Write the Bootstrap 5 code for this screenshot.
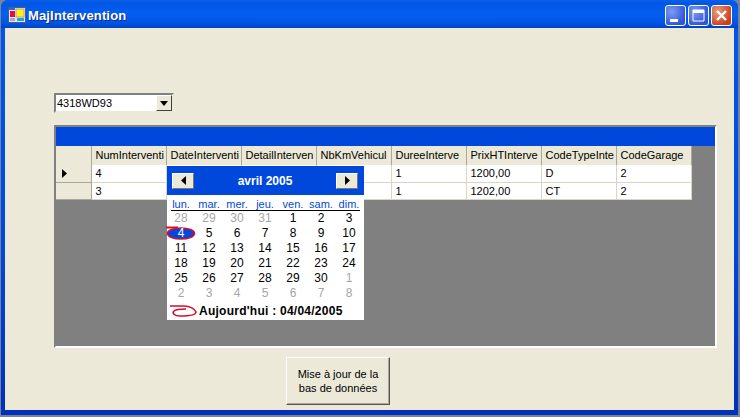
<!DOCTYPE html>
<html lang="fr">
<head>
<meta charset="UTF-8">
<title>MajIntervention</title>
<link href="https://cdn.jsdelivr.net/npm/bootstrap@5.3.0/dist/css/bootstrap.min.css" rel="stylesheet">
<style>
    html, body { height: 100%; margin: 0; overflow: hidden; background: #76849c; }
    body, button, table { font-family: "Liberation Sans", Arial, sans-serif; font-size: 11px; color: #000; }
    .win { width: 737px; height: 415px; margin-left: 1px; background: linear-gradient(#0058ee, #0048dc 60%, #0030b8); border-radius: 7px 7px 0 0; }
    .win-title { height: 28px; padding: 2px 6px 0 7px; gap: 2px; background: linear-gradient(#0a5fe8, #0256e6 12%, #045ff0 50%, #0053e2 85%, #0042c0); border-radius: 7px 7px 0 0; }
    .win-name { font: bold 13px "Liberation Sans", Arial, sans-serif; letter-spacing: .15px; color: #fff; text-shadow: 1px 1px 0 #0f2a80; }
    .cap-group { gap: 2px; }
    .cap-btn { width: 21px; height: 21px; border: 1px solid #fff; border-radius: 3px; background: radial-gradient(circle at 30% 30%, #7d9cf0, #2f55d8 75%); position: relative; padding: 0; }
    .cap-btn.cls { background: radial-gradient(circle at 30% 30%, #eb9c80, #c9401c 75%); }
    .cap-btn svg { position: absolute; left: 0; top: 0; }
    .win-body { height: 382px; margin: 0 4px; background: #ece9d8; padding: 65px 0 0 49px; }
    .combo { width: 120px; height: 20px; background: #fff; border: 2px solid; border-color: #808080 #ece9d8 #ece9d8 #808080; padding-left: 1px; line-height: 16px; margin-bottom: 12px; }
    .combo-arrow { width: 16px; height: 16px; margin-left: auto; background: #ece9d8; border: 1px solid; border-color: #fff #404040 #404040 #fff; }
    .grid-box { width: 663px; height: 223px; background: #808080; border: 2px solid; border-color: #808080 #fff #fff #808080; position: relative; margin-bottom: 9px; }
    .grid-cap { height: 19px; background: #0048dc; }
    .grid-tbl { border-collapse: collapse; table-layout: fixed; width: 635px; }
    .grid-tbl th, .grid-tbl td { height: 17px; padding: 0 0 0 4px; font-weight: 400; white-space: nowrap; overflow: hidden; background: #fff; border-right: 1px solid #d8d5c6; border-bottom: 1px solid #d8d5c6; }
    .grid-tbl th { width: 75px; height: 19px; background: #ece9d8; border-right: 1px solid #aca899; border-bottom: 0; }
    .grid-tbl th:first-child { width: 35px; }
    .grid-tbl .row-head { background: #ece9d8; padding: 0 0 0 6px; border-right: 1px solid #aca899; border-bottom: 1px solid #aca899; }
    .cal { position: absolute; left: 111px; top: 39px; width: 197px; height: 154px; background: #fff; }
    .cal-head { height: 29px; background: #0048dc; padding: 0 6px 0 5px; color: #fff; font-weight: 700; font-size: 12px; }
    .cal-nav { width: 22px; height: 16px; padding: 0; background: #ece9d8; border: 1px solid; border-color: #fff #777 #777 #fff; }
    .cal-days { margin: 0 4px; border-bottom: 1px solid #000; height: 16px; padding-top: 2px; color: #0048dc; line-height: 14px; }
    .cal-days span, .cal-week span { width: 28px; text-align: center; flex: none; }
    .cal-days span:first-child { margin-left: -4px; }
    .cal-week { height: 15px; line-height: 15px; font-size: 12px; }
    .off { color: #a6a6a6; }
    .today-cell { position: relative; color: #fff; }
    .today-cell svg { position: absolute; left: 0; top: 0; overflow: visible; }
    .today-cell b { position: relative; font-weight: 400; }
    .cal-foot { padding-left: 3px; height: 19px; font-weight: 700; font-size: 12px; letter-spacing: .25px; }
    .cal-foot svg { margin-right: 3px; overflow: visible; }
    .majbtn { display: block; width: 104px; height: 48px; margin-left: 232px; background: #ece9d8; border: 1px solid; border-color: #fff #555 #555 #fff; box-shadow: inset -1px -1px 0 #aca899; line-height: 14px; padding: 0; }
</style>
</head>
<body>
<div class="win">
    <div class="win-title d-flex align-items-center">
        <svg width="18" height="16" viewBox="0 0 18 16">
            <rect x="0.5" y="0.5" width="17" height="15" fill="#dfe6f5" stroke="#4a5a90"/>
            <rect x="1" y="1" width="6" height="2" fill="#2d69c8"/>
            <rect x="2" y="4" width="5" height="6" fill="#e0103c"/>
            <rect x="8" y="2" width="8" height="8" fill="#ffee22" stroke="#777" stroke-width=".5"/>
            <rect x="2" y="11" width="5" height="3" fill="#a9a9c8"/>
            <rect x="9" y="11" width="7" height="3" fill="#25a0d8"/>
        </svg>
        <span class="win-name">MajIntervention</span>
        <div class="cap-group d-flex ms-auto">
            <button class="cap-btn" aria-label="Réduire"><svg width="19" height="19"><rect x="4" y="13" width="8" height="3" fill="#fff"/></svg></button>
            <button class="cap-btn" aria-label="Agrandir"><svg width="19" height="19"><path d="M4 4h11v11H4z" fill="none" stroke="#fff"/><rect x="4" y="4" width="11" height="3" fill="#fff"/></svg></button>
            <button class="cap-btn cls" aria-label="Fermer"><svg width="19" height="19"><path d="M5 5l9 9M14 5l-9 9" stroke="#fff" stroke-width="2.400"/></svg></button>
        </div>
    </div>
    <div class="win-body">
        <div class="combo d-flex align-items-center">
            <span>4318WD93</span>
            <div class="combo-arrow d-flex align-items-center justify-content-center">
                <svg width="8" height="5"><path d="M0 0h8L4 5z" fill="#000"/></svg>
            </div>
        </div>
        <div class="grid-box">
            <div class="grid-cap"></div>
            <table class="grid-tbl">
                <thead>
                    <tr>
                        <th></th><th>NumInterventi</th><th>DateInterventi</th><th>DetailInterven</th><th>NbKmVehicul</th><th>DureeInterve</th><th>PrixHTInterve</th><th>CodeTypeInte</th><th>CodeGarage</th>
                    </tr>
                </thead>
                <tbody>
                    <tr>
                        <td class="row-head"><svg width="6" height="9" class="d-block"><path d="M0 0l5 4.500-5 4.500z" fill="#000"/></svg></td>
                        <td>4</td><td></td><td></td><td></td><td>1</td><td>1200,00</td><td>D</td><td>2</td>
                    </tr>
                    <tr>
                        <td class="row-head"></td>
                        <td>3</td><td></td><td></td><td></td><td>1</td><td>1202,00</td><td>CT</td><td>2</td>
                    </tr>
                </tbody>
            </table>
            <div class="cal">
                <div class="cal-head d-flex align-items-center justify-content-between">
                    <button class="cal-nav d-flex align-items-center justify-content-center" aria-label="Précédent"><svg width="5" height="9"><path d="M5 0v9L0 4.500z" fill="#000"/></svg></button>
                    <span>avril 2005</span>
                    <button class="cal-nav d-flex align-items-center justify-content-center" aria-label="Suivant"><svg width="5" height="9"><path d="M0 0v9l5-4.500z" fill="#000"/></svg></button>
                </div>
                <div class="cal-days d-flex"><span>lun.</span><span>mar.</span><span>mer.</span><span>jeu.</span><span>ven.</span><span>sam.</span><span>dim.</span></div>
                <div id="weeks"></div>
                <div class="cal-foot d-flex align-items-center">
                    <svg width="26" height="12" viewBox="0 0 26 12"><path d="M0 1H14C20 1 25 4 26 7C26 10 18 11 10 11C4 11 2 8 4 6C6 4 12 4 16 4" fill="none" stroke="#d01030" stroke-width="1.600"/></svg>
                    <span>Aujourd'hui : 04/04/2005</span>
                </div>
            </div>
        </div>
        <button class="majbtn">Mise à jour de la<br>bas de données</button>
    </div>
</div>

<script>
    // six rows of the month grid, o = greyed day from another month, t = today
    let weeks = [
        ["o28","o29","o30","o31","1","2","3"],
        ["t4","5","6","7","8","9","10"],
        ["11","12","13","14","15","16","17"],
        ["18","19","20","21","22","23","24"],
        ["25","26","27","28","29","30","o1"],
        ["o2","o3","o4","o5","o6","o7","o8"]
    ];
    let html = "";
    weeks.forEach(function (week) {
        html += '<div class="cal-week d-flex">';
        week.forEach(function (d) {
            if (d[0] === "o") {
                html += '<span class="off">' + d.slice(1) + '</span>';
            } else if (d[0] === "t") {
                html += '<span class="today-cell"><svg width="28" height="15"><path d="M-1 1.500h12" stroke="#d01030" stroke-width="2"/><ellipse cx="14" cy="7.500" rx="13.500" ry="5.500" fill="#0048dc" stroke="#d01030" stroke-width="1.600"/></svg><b>' + d.slice(1) + '</b></span>';
            } else {
                html += '<span>' + d + '</span>';
            }
        });
        html += '</div>';
    });
    document.getElementById("weeks").innerHTML = html;
</script>
<script src="https://cdn.jsdelivr.net/npm/bootstrap@5.3.0/dist/js/bootstrap.bundle.min.js"></script>
</body>
</html>
